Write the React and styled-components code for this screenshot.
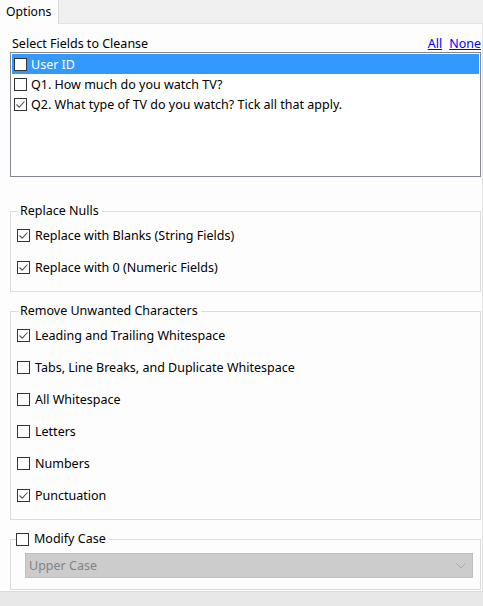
import React from 'react';
import styled, { createGlobalStyle } from 'styled-components';

const Global = createGlobalStyle`
  html, body {
    margin: 0;
    padding: 0;
    background: #fdfdfd;
  }
  body {
    font-family: "Noto Sans", "Liberation Sans", sans-serif;
    font-size: 12.5px;
    color: #000;
  }
`

const Window = styled.div`
  width: 483px;
  height: 606px;
  display: flex;
  flex-direction: column;
  overflow: hidden;
`

const TabStrip = styled.div`
  height: 24px;
  background: #f0f0f0;
  border-bottom: 1px solid #e3e3e3;
  display: flex;
  align-items: flex-end;
  box-sizing: border-box;
`

const Tab = styled.div`
  height: 24px;
  box-sizing: border-box;
  padding: 3px 6px 0 6px;
  width: 59px;
  background: #fdfdfd;
  border-right: 1px solid #d9d9d9;
  margin-bottom: -1px;
  font-size: 12.2px;
`

const Panel = styled.div`
  flex: 1;
  display: flex;
  flex-direction: column;
  padding: 10px 1px 0 10px;
  border-right: 1px solid #e3e3e3;
`

const HeaderRow = styled.div`
  display: flex;
  justify-content: space-between;
  align-items: flex-end;
  height: 18px;
  padding-left: 2px;
`

const Links = styled.div`
  display: flex;
  gap: 7px;
`

const Link = styled.a`
  color: #0000ff;
  text-decoration: underline;
  cursor: pointer;
`

const ListBox = styled.div`
  height: 125px;
  box-sizing: border-box;
  border: 1px solid #828790;
  background: #fff;
  padding: 1px;
`

const ListRow = styled.div`
  height: 20px;
  display: flex;
  align-items: center;
  gap: 4px;
  padding-left: 2px;
  background: ${p => (p.selected ? '#3399ff' : 'transparent')};
  color: ${p => (p.selected ? '#fff' : '#000')};
`

const Group = styled.fieldset`
  margin: ${p => p.top}px 0 0 0;
  padding: 0 0 0 6px;
  border: 1px solid #dcdcdc;
  height: ${p => p.h}px;
  box-sizing: border-box;
  min-width: 0;
`

const Legend = styled.legend`
  padding: 0 3px 0 2px;
  margin-left: 1px;
  display: flex;
  align-items: center;
  gap: 5px;
  line-height: 16px;
`

const LegendCheck = styled.span`
  margin-left: -4px;
  display: flex;
`

const Items = styled.div`
  display: flex;
  flex-direction: column;
  padding-top: 7px;
  gap: 14px;
`

const Item = styled.label`
  display: flex;
  align-items: center;
  gap: 5px;
  height: 18px;
`

const Box = styled.span`
  width: 13px;
  height: 13px;
  box-sizing: border-box;
  border: 1px solid #333;
  background: #fff;
  display: inline-flex;
  flex-shrink: 0;
`

const Select = styled.div`
  margin: 6px 7px 0 8px;
  height: 25px;
  box-sizing: border-box;
  background: #cccccc;
  border: 1px solid #bfbfbf;
  color: #838383;
  display: flex;
  align-items: center;
  justify-content: space-between;
  padding: 0 6px 0 3px;
`

const StatusBar = styled.div`
  height: 14px;
  background: #e8e8e8;
  border-top: 1px solid #dadada;
`

const Check = ({ checked }) => (
  <Box>
    {checked && (
      <svg width="11" height="11" viewBox="0 0 11 11">
        <path d="M1.5 5.5 L4.2 8.2 L9.5 2.5" fill="none" stroke="#555" strokeWidth="1.1" />
      </svg>
    )}
  </Box>
)

const fields = [
  { label: 'User ID', checked: false, selected: true },
  { label: 'Q1. How much do you watch TV?', checked: false },
  { label: 'Q2. What type of TV do you watch? Tick all that apply.', checked: true },
]

const nulls = [
  { label: 'Replace with Blanks (String Fields)', checked: true },
  { label: 'Replace with 0 (Numeric Fields)', checked: true },
]

const chars = [
  { label: 'Leading and Trailing Whitespace', checked: true },
  { label: 'Tabs, Line Breaks, and Duplicate Whitespace', checked: false },
  { label: 'All Whitespace', checked: false },
  { label: 'Letters', checked: false },
  { label: 'Numbers', checked: false },
  { label: 'Punctuation', checked: true },
]

const App = () => {
  return (
    <Window>
      <Global />
      <TabStrip>
        <Tab>Options</Tab>
      </TabStrip>
      <Panel>
        <HeaderRow>
          <span>Select Fields to Cleanse</span>
          <Links>
            <Link>All</Link>
            <Link>None</Link>
          </Links>
        </HeaderRow>
        <ListBox>
          {fields.map(f => (
            <ListRow key={f.label} selected={f.selected}>
              <Check checked={f.checked} />
              {f.label}
            </ListRow>
          ))}
        </ListBox>

        <Group top={26} h={89}>
          <Legend>Replace Nulls</Legend>
          <Items>
            {nulls.map(i => (
              <Item key={i.label}><Check checked={i.checked} />{i.label}</Item>
            ))}
          </Items>
        </Group>

        <Group top={11} h={217}>
          <Legend>Remove Unwanted Characters</Legend>
          <Items>
            {chars.map(i => (
              <Item key={i.label}><Check checked={i.checked} />{i.label}</Item>
            ))}
          </Items>
        </Group>

        <Group top={11} h={59}>
          <Legend>
            <LegendCheck><Check checked={false} /></LegendCheck>
            Modify Case
          </Legend>
          <Select>
            <span>Upper Case</span>
            <svg width="10" height="6" viewBox="0 0 10 6">
              <path d="M0.5 0.5 L5 5 L9.5 0.5" fill="none" stroke="#a8a8a8" strokeWidth="1" />
            </svg>
          </Select>
        </Group>
      </Panel>
      <StatusBar />
    </Window>
  )
};

export default App;
